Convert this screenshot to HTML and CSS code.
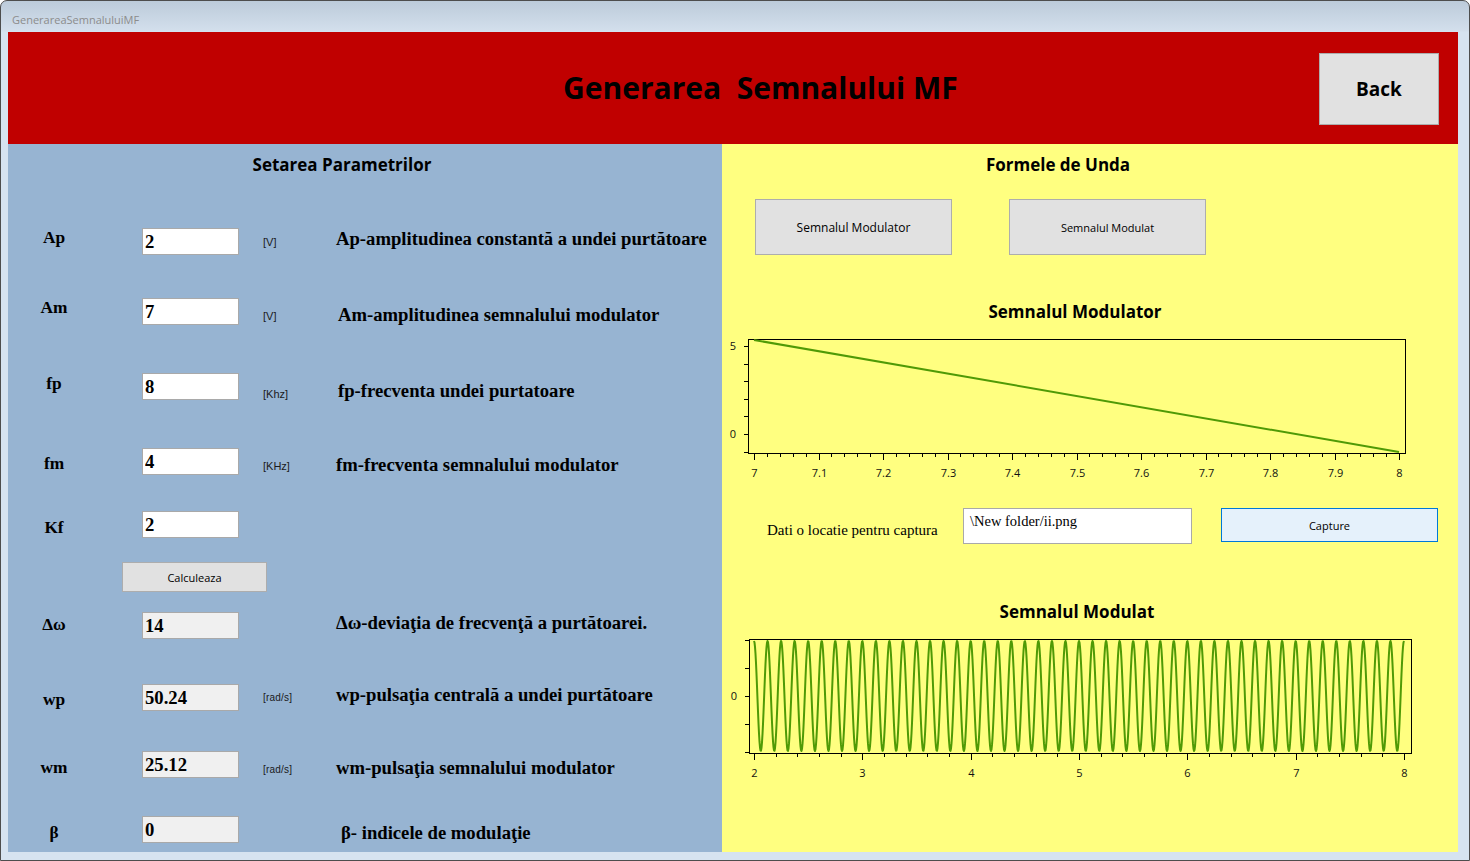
FILE: index.html
```html
<!DOCTYPE html>
<html>
<head>
  <meta charset="UTF-8" />
  <title>GenerareaSemnaluluiMF</title>
  <link rel="stylesheet" href="styles.css">
</head>
<body>
  <div class="window">
    <div class="title-bar">GenerareaSemnaluluiMF</div>
    <div class="frame">
      <div class="client">

        <div class="header">
          <h1 class="title">Generarea  Semnalului MF</h1>
          <button class="back-btn">Back</button>
        </div>

        <div class="main">
          <!-- left: parameters -->
          <div class="params">
            <h2 class="panel-title params-title">Setarea Parametrilor</h2>

            <div class="rows">
              <div class="row row-ap">
                <span class="lbl">Ap</span>
                <input class="field" type="text" value="2">
                <span class="unit shift-7">[V]</span>
                <span class="desc">Ap-amplitudinea constantă a undei purtătoare</span>
              </div>

              <div class="row row-am">
                <span class="lbl">Am</span>
                <input class="field" type="text" value="7">
                <span class="unit shift-11">[V]</span>
                <span class="desc shift-6 nudge">Am-amplitudinea semnalului modulator</span>
              </div>

              <div class="row row-fp">
                <span class="lbl shift-1">fp</span>
                <input class="field" type="text" value="8">
                <span class="unit shift-14">[Khz]</span>
                <span class="desc shift-7 nudge">fp-frecventa undei purtatoare</span>
              </div>

              <div class="row row-fm">
                <span class="lbl shift-6">fm</span>
                <input class="field" type="text" value="4">
                <span class="unit shift-11">[KHz]</span>
                <span class="desc shift-6">fm-frecventa semnalului modulator</span>
              </div>

              <div class="row row-kf">
                <span class="lbl shift-7">Kf</span>
                <input class="field" type="text" value="2">
              </div>

              <div class="row-calc">
                <button class="small-btn calc-btn">Calculeaza</button>
              </div>

              <div class="row row-dw">
                <span class="lbl shift-3">Δω</span>
                <input class="field readonly" type="text" value="14" readonly>
                <span class="unit"></span>
                <span class="desc">Δω-deviaţia de frecvenţă a purtătoarei.</span>
              </div>

              <div class="row row-wp">
                <span class="lbl shift-6">wp</span>
                <input class="field readonly" type="text" value="50.24" readonly>
                <span class="unit small shift-7">[rad/s]</span>
                <span class="desc">wp-pulsaţia centrală a undei purtătoare</span>
              </div>

              <div class="row row-wm">
                <span class="lbl shift-7">wm</span>
                <input class="field readonly" type="text" value="25.12" readonly>
                <span class="unit small shift-12">[rad/s]</span>
                <span class="desc shift-6">wm-pulsaţia semnalului modulator</span>
              </div>

              <div class="row row-beta">
                <span class="lbl shift-7">β</span>
                <input class="field readonly" type="text" value="0" readonly>
                <span class="unit"></span>
                <span class="desc shift-6 nudge-more">β- indicele de modulaţie</span>
              </div>
            </div>
          </div>

          <!-- right: waveforms -->
          <div class="waves">
            <h2 class="panel-title waves-title">Formele de Unda</h2>

            <div class="wave-buttons">
              <button class="small-btn wave-btn">Semnalul Modulator</button>
              <button class="small-btn wave-btn narrow">Semnalul Modulat</button>
            </div>

            <h2 class="panel-title chart-title">Semnalul Modulator</h2>
            <svg class="chart" id="chartModulator" width="736" height="155"></svg>

            <div class="capture-row">
              <span class="capture-label">Dati o locatie pentru captura</span>
              <div class="capture-path">\New folder/ii.png</div>
              <button class="capture-btn">Capture</button>
            </div>

            <h2 class="panel-title chart-title second">Semnalul Modulat</h2>
            <svg class="chart" id="chartModulat" width="736" height="155"></svg>
          </div>
        </div>

      </div>
    </div>
  </div>

  <script>
    const NS = 'http://www.w3.org/2000/svg';

    function add(svg, tag, attrs, text) {
      const el = document.createElementNS(NS, tag);
      for (const k in attrs) el.setAttribute(k, attrs[k]);
      if (text !== undefined) el.textContent = text;
      svg.appendChild(el);
      return el;
    }

    function drawAxes(svg, c) {
      add(svg, 'rect', {
        x: c.left + 0.5, y: c.top + 0.5,
        width: c.right - c.left, height: c.bottom - c.top,
        class: 'plot-box'
      });

      c.yTicks.forEach(y => {
        add(svg, 'line', { x1: c.left - 4, x2: c.left, y1: y + 0.5, y2: y + 0.5, class: 'tick' });
      });
      c.yLabels.forEach(l => {
        add(svg, 'text', { x: c.left - 12, y: l.y + 4, class: 'tick-label', 'text-anchor': 'end' }, l.text);
      });

      for (let i = 0; i <= c.xSteps; i++) {
        const x = Math.round(c.x0 + i * (c.x1 - c.x0) / c.xSteps) + 0.5;
        const major = i % c.majorEvery === 0;
        add(svg, 'line', { x1: x, x2: x, y1: c.bottom + 1, y2: c.bottom + (major ? 7 : 4), class: 'tick' });
        if (major) {
          add(svg, 'text', { x: x, y: c.bottom + 24, class: 'tick-label', 'text-anchor': 'middle' },
            c.xLabel(i / c.majorEvery));
        }
      }
    }

    // Semnalul Modulator: t = 7..8
    const chart1 = document.getElementById('chartModulator');
    drawAxes(chart1, {
      left: 26, right: 683, top: 9, bottom: 123,
      x0: 32, x1: 677, xSteps: 50, majorEvery: 5,
      xLabel: k => (k === 0 ? '7' : k === 10 ? '8' : (7 + k / 10).toFixed(1)),
      yTicks: [16, 34, 51, 69, 86, 104, 122],
      yLabels: [{ y: 16, text: '5' }, { y: 104, text: '0' }]
    });
    add(chart1, 'polyline', { points: '32,10 677,122', class: 'signal' });

    // Semnalul Modulat: t = 2..8
    const chart2 = document.getElementById('chartModulat');
    drawAxes(chart2, {
      left: 27, right: 689, top: 9, bottom: 123,
      x0: 32, x1: 682, xSteps: 30, majorEvery: 5,
      xLabel: k => String(2 + k),
      yTicks: [10, 38, 66, 94, 122],
      yLabels: [{ y: 66, text: '0' }]
    });
    const pts = [];
    for (let px = 32; px <= 682; px += 0.5) {
      const t = (px - 32) / 650 * 6;
      const y = 66 - 55 * Math.cos(2 * Math.PI * 8 * t);
      pts.push(px + ',' + y.toFixed(2));
    }
    add(chart2, 'polyline', { points: pts.join(' '), class: 'signal' });
  </script>
</body>
</html>
```

FILE: styles.css
```css
* {
  box-sizing: border-box;
}

body {
  margin: 0;
  background: #fff;
  font-family: 'Open Sans', sans-serif;
}

.window {
  width: 1470px;
  height: 861px;
  border: 1px solid #4d4d4d;
  border-radius: 7px 7px 0 0;
  background: linear-gradient(to bottom, #bccbda 0, #d3dfec 30px, #d6e3f0 31px);
  overflow: hidden;
}

.title-bar {
  height: 31px;
  padding: 11px 0 0 11px;
  font-size: 11px;
  line-height: 16px;
  color: #8c8c8c;
}

.frame {
  padding: 0 11px 8px 7px;
}

.client {
  width: 1450px;
  height: 820px;
}

/* header */
.header {
  height: 112px;
  background: #c00000;
  display: flex;
  align-items: center;
}

.title {
  margin: 0 0 0 555px;
  font-size: 30px;
  line-height: 40px;
  font-weight: 700;
  white-space: pre;
  color: #000;
}

.back-btn {
  margin: 2px 19px 0 auto;
  width: 120px;
  height: 72px;
  background: #e1e1e1;
  border: 1px solid #adadad;
  font-family: 'Open Sans', sans-serif;
  font-size: 19px;
  font-weight: 700;
  color: #000;
  padding: 0;
}

.main {
  display: flex;
  height: 708px;
}

.panel-title {
  margin: 0;
  font-size: 17px;
  line-height: 22px;
  font-weight: 700;
  text-align: center;
  color: #000;
}

/* left panel */
.params {
  width: 714px;
  background: #97b4d2;
  padding-top: 10px;
}

.params-title {
  width: 668px;
  margin-bottom: 52px;
}

.rows {
  padding-left: 14px;
}

.row {
  display: grid;
  grid-template-columns: 120px 121px 73px 1fr;
  align-items: start;
}

.row-ap { height: 70px; }
.row-am { height: 75px; }
.row-fp { height: 75px; }
.row-fm { height: 63px; }
.row-kf { height: 51px; }
.row-dw { height: 72px; }
.row-wp { height: 67px; }
.row-wm { height: 65px; }
.row-beta { height: 36px; }

.lbl {
  width: 64px;
  text-align: center;
  font-family: 'Liberation Serif', 'Times New Roman', serif;
  font-weight: 700;
  font-size: 17.33px;
  line-height: 20px;
  color: #000;
}

.field {
  width: 97px;
  height: 27px;
  border: 1px solid #a9a9a9;
  background: #fff;
  padding: 0 2px;
  font-family: 'Liberation Serif', 'Times New Roman', serif;
  font-weight: 700;
  font-size: 18.67px;
  color: #000;
  outline: none;
}

.field.readonly {
  background: #f0f0f0;
}

.unit {
  font-family: 'Liberation Sans', Arial, sans-serif;
  font-size: 11px;
  line-height: 14px;
  color: #1a1a1a;
}

.unit.small {
  font-size: 10px;
  letter-spacing: 0.2px;
}

.desc {
  font-family: 'Liberation Serif', 'Times New Roman', serif;
  font-weight: 700;
  font-size: 18.67px;
  line-height: 22px;
  color: #000;
  white-space: nowrap;
}

.desc.nudge { margin-left: 2px; }
.desc.nudge-more { margin-left: 5px; }

.shift-1 { margin-top: 1px; }
.shift-3 { margin-top: 3px; }
.shift-6 { margin-top: 6px; }
.shift-7 { margin-top: 7px; }
.shift-11 { margin-top: 11px; }
.shift-12 { margin-top: 12px; }
.shift-14 { margin-top: 14px; }

.row-calc {
  height: 50px;
  padding-left: 100px;
}

.small-btn {
  background: #e1e1e1;
  border: 1px solid #adadad;
  font-family: 'Open Sans', sans-serif;
  font-size: 12px;
  color: #000;
  padding: 0;
}

.calc-btn {
  width: 145px;
  height: 30px;
  font-size: 11px;
}

/* right panel */
.waves {
  flex: 1;
  background: #ffff80;
  padding-top: 10px;
}

.waves-title {
  width: 672px;
}

.wave-buttons {
  display: flex;
  gap: 57px;
  padding-left: 33px;
  margin-top: 23px;
}

.wave-btn {
  width: 197px;
  height: 56px;
}

.wave-btn.narrow {
  font-size: 11px;
}

.chart-title {
  width: 706px;
  margin-top: 46px;
}

.chart-title.second {
  width: 710px;
  margin-top: 57px;
}

.chart {
  display: block;
  margin-top: 7px;
}

.plot-box {
  fill: none;
  stroke: #000;
  stroke-width: 1;
}

.tick {
  stroke: #000;
  stroke-width: 1;
}

.tick-label {
  font-family: 'Open Sans', sans-serif;
  font-size: 11px;
  fill: #111;
}

.signal {
  fill: none;
  stroke: #4f9a06;
  stroke-width: 2;
  stroke-linejoin: round;
}

.capture-row {
  display: flex;
  align-items: flex-start;
  margin-top: 23px;
  height: 36px;
  padding-left: 45px;
}

.capture-label {
  width: 196px;
  margin-top: 13px;
  font-family: 'Liberation Serif', 'Times New Roman', serif;
  font-size: 15px;
  line-height: 18px;
  color: #000;
}

.capture-path {
  width: 229px;
  height: 36px;
  background: #fff;
  border: 1px solid #a9a9a9;
  padding: 3px 6px;
  font-family: 'Liberation Serif', 'Times New Roman', serif;
  font-size: 14.5px;
  line-height: 18px;
  color: #000;
}

.capture-btn {
  margin-left: 29px;
  width: 217px;
  height: 34px;
  background: #e5f1fb;
  border: 1px solid #0078d7;
  font-family: 'Open Sans', sans-serif;
  font-size: 11px;
  color: #000;
  padding: 0;
}
```
